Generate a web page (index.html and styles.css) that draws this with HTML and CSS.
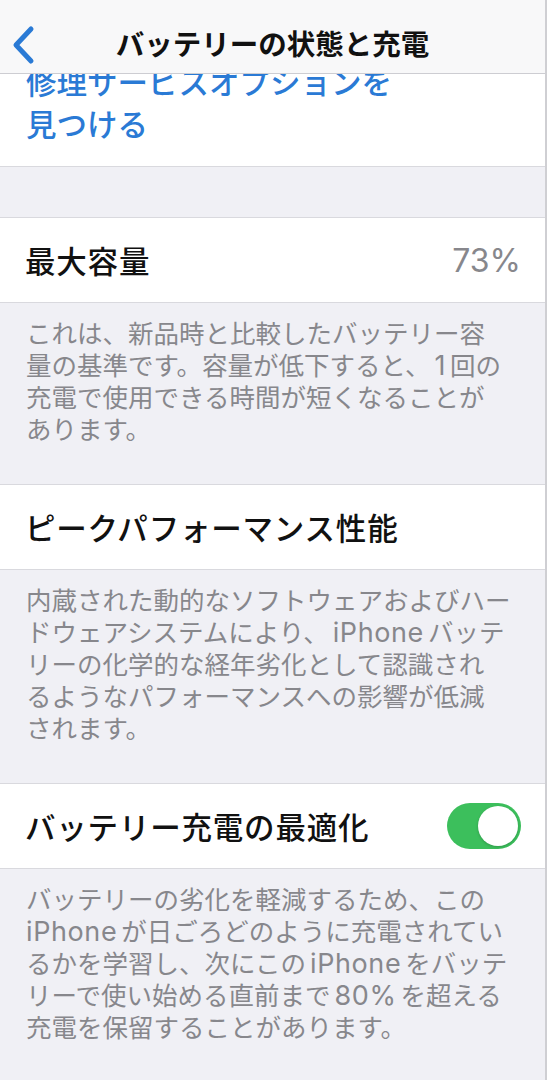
FILE: index.html
```html
<!DOCTYPE html>
<html lang="ja">
<head>
  <meta charset="UTF-8" />
  <meta name="viewport" content="width=device-width, initial-scale=1.0"/>
  <title>バッテリーの状態と充電</title>
  <link rel="stylesheet" href="styles.css">
</head>
<body>
  <header class="nav-bar">
    <a href="#" class="back-btn" title="戻る">
      <svg width="26" height="40" viewBox="0 0 26 40">
        <polyline points="20,4 5,20 20,36" fill="none" stroke="#2a7ad5" stroke-width="5" stroke-linecap="round" stroke-linejoin="round"/>
      </svg>
    </a>
    <h1 class="nav-title">バッテリーの状態と充電</h1>
  </header>

  <main class="settings">
    <div class="group first">
      <a href="#" class="link-cell">修理サービスオプションを<br>見つける</a>
    </div>

    <div class="group spaced">
      <div class="cell">
        <span class="cell-label">最大容量</span>
        <span class="cell-value">73%</span>
      </div>
    </div>
    <p class="footnote">
      これは、新品時と比較したバッテリー容<br>
      量の基準です。容量が低下すると、<span class="en">1</span>回の<br>
      充電で使用できる時間が短くなることが<br>
      あります。
    </p>

    <div class="group">
      <div class="cell">
        <span class="cell-label">ピークパフォーマンス性能</span>
      </div>
    </div>
    <p class="footnote">
      内蔵された動的なソフトウェアおよびハー<br>
      ドウェアシステムにより、<span class="en">iPhone</span>バッテ<br>
      リーの化学的な経年劣化として認識され<br>
      るようなパフォーマンスへの影響が低減<br>
      されます。
    </p>

    <div class="group">
      <div class="cell">
        <span class="cell-label">バッテリー充電の最適化</span>
        <label class="switch">
          <input type="checkbox" checked>
          <span class="knob"></span>
        </label>
      </div>
    </div>
    <p class="footnote">
      バッテリーの劣化を軽減するため、この<br>
      <span class="en start">iPhone</span>が日ごろどのように充電されてい<br>
      るかを学習し、次にこの<span class="en">iPhone</span>をバッテ<br>
      リーで使い始める直前まで<span class="en">80%</span>を超える<br>
      充電を保留することがあります。
    </p>
  </main>
</body>
</html>
```

FILE: styles.css
```css
:root {
  --blue: #2a7ad5;
  --group-bg: #f0f0f5;
  --bar-bg: #f8f8f9;
  --line: #d9d9de;
  --label: #111;
  --muted: #87878c;
  --green: #3cbf5c;
}

* {
  margin: 0;
  padding: 0;
  box-sizing: border-box;
}

body {
  font-family: Inter, "Noto Sans CJK JP", sans-serif;
  background-color: var(--group-bg);
  color: var(--label);
  height: 1080px;
  overflow: hidden;
  border-right: 2px solid #cfcfd3;
}

/* top navigation bar */
.nav-bar {
  position: relative;
  z-index: 2;
  height: 74px;
  padding-top: 16px;
  display: flex;
  align-items: center;
  justify-content: center;
  background-color: var(--bar-bg);
  border-bottom: 1px solid #cdcdd2;
}

.back-btn {
  position: absolute;
  left: 11px;
  top: 25px;
  display: block;
  width: 26px;
  height: 40px;
}

.nav-title {
  font-size: 28.5px;
  font-weight: 700;
  line-height: 40px;
}

.settings {
  display: flex;
  flex-direction: column;
}

.group {
  background: #fff;
  border-top: 1px solid var(--line);
  border-bottom: 1px solid var(--line);
}

/* list is scrolled a little, first line sits under the bar */
.group.first {
  border-top: none;
  margin-top: -12px;
}

.group.spaced {
  margin-top: 50px;
}

.link-cell {
  display: block;
  padding: 0 26px 20px;
  color: var(--blue);
  text-decoration: none;
  font-size: 30.5px;
  font-weight: 500;
  line-height: 42px;
}

.cell {
  height: 84px;
  display: flex;
  align-items: center;
  justify-content: space-between;
  padding: 0 24px 0 25px;
}

.cell-label {
  font-size: 30.5px;
  font-weight: 500;
  letter-spacing: 0.8px;
  white-space: nowrap;
}

.cell-value {
  font-size: 32px;
  color: var(--muted);
  font-weight: 400;
}

.footnote {
  padding: 15px 26px 38px;
  font-size: 25.5px;
  line-height: 32px;
  color: var(--muted);
  white-space: nowrap;
}

.footnote .en {
  font-size: 27px;
  letter-spacing: 0.6px;
  margin: 0 4px;
}

.footnote .en.start {
  margin-left: 0;
}

.switch {
  position: relative;
  display: block;
  width: 74px;
  height: 46px;
}

.switch input {
  display: none;
}

.switch .knob {
  display: block;
  width: 100%;
  height: 100%;
  border-radius: 23px;
  background: var(--green);
}

.switch .knob::after {
  content: "";
  position: absolute;
  right: 3px;
  top: 3px;
  width: 40px;
  height: 40px;
  border-radius: 50%;
  background: #fff;
  box-shadow: 0 1px 3px rgba(0, 0, 0, 0.2);
}
```
